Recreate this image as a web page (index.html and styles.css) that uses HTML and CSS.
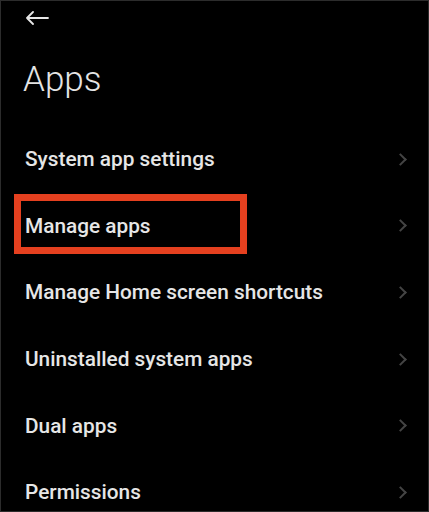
FILE: index.html
```html
<!DOCTYPE html>
<html lang="en">
<head>
    <meta charset="UTF-8">
    <meta name="viewport" content="width=device-width, initial-scale=1.0">
    <title>Apps</title>
    <link rel="stylesheet" href="styles.css">
</head>
<body>
    <div class="screen">
        <div class="topbar">
            <svg class="back" width="24" height="14" viewBox="0 0 24 14">
                <path d="M23 7H2M8 1L2 7l6 6" fill="none" stroke="#e6e6e6" stroke-width="1.8" stroke-linecap="round" stroke-linejoin="round"/>
            </svg>
        </div>
        <h1 class="title">Apps</h1>
        <div class="list">
            <div class="row"><span>System app settings</span><span class="chev"></span></div>
            <div class="row marked"><span>Manage apps</span><span class="chev"></span><div class="highlight"></div></div>
            <div class="row"><span>Manage Home screen shortcuts</span><span class="chev"></span></div>
            <div class="row"><span>Uninstalled system apps</span><span class="chev"></span></div>
            <div class="row"><span>Dual apps</span><span class="chev"></span></div>
            <div class="row"><span>Permissions</span><span class="chev"></span></div>
        </div>
    </div>
</body>
</html>
```

FILE: styles.css
```css
body, html {
    margin: 0;
    height: 100%;
    background-color: #000;
    font-family: Roboto, "Liberation Sans", sans-serif;
    color: #e8e8e8;
}
.screen {
    height: 512px;
    box-sizing: border-box;
    border: 1px solid #2c2c2c;
    overflow: hidden;
}
.topbar {
    height: 34px;
    display: flex;
    align-items: center;
    padding-left: 24px;
}
.back {
    display: block;
}
.title {
    margin: 23px 0 0 22px;
    font-size: 35px;
    font-weight: 300;
    line-height: 44px;
    color: #e4e4e4;
}
.list {
    margin-top: 24px;
}
.row {
    position: relative;
    height: 66.6px;
    display: flex;
    align-items: center;
    justify-content: space-between;
    padding: 0 19px 0 24px;
    font-size: 20.8px;
    font-weight: 500;
    color: #e6e6e6;
}
.chev {
    width: 7px;
    height: 7px;
    border-right: 2px solid #444;
    border-top: 2px solid #444;
    transform: rotate(45deg);
    margin-right: 4px;
}
.highlight {
    position: absolute;
    left: 13px;
    top: 1px;
    width: 219px;
    height: 46px;
    border: 7px solid #e5401f;
}
```
